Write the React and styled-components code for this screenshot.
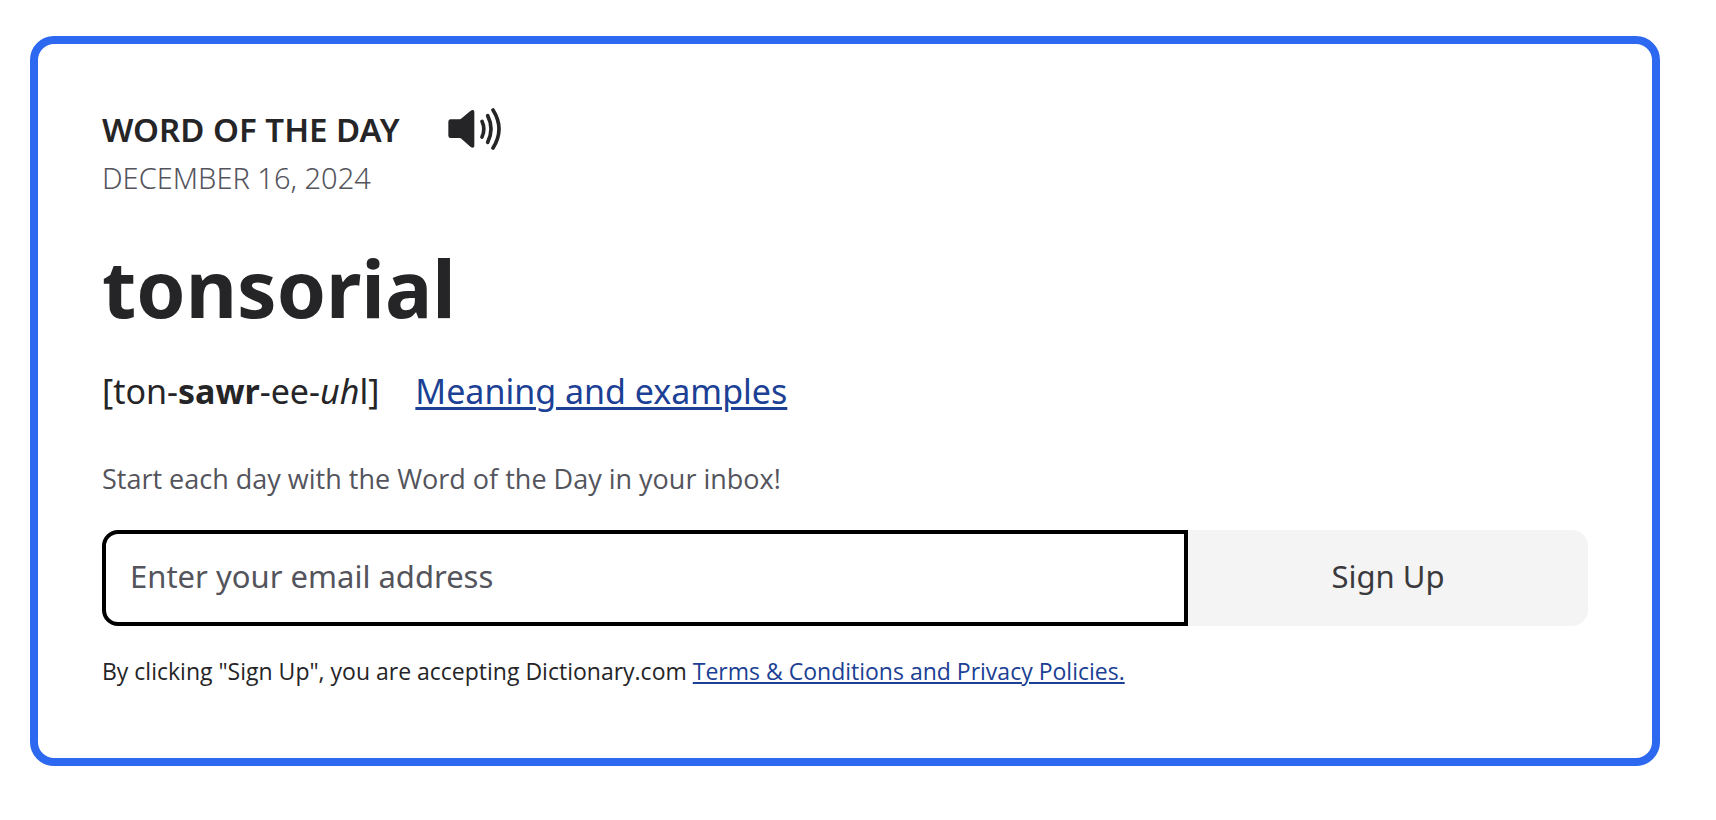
import React from "react";
import styled, { createGlobalStyle } from "styled-components";

const GlobalStyle = createGlobalStyle`
  *, *::before, *::after { box-sizing: border-box; }
  body {
    margin: 0;
    background: #fff;
    color: #252527;
    font-family: "Noto Sans", "Open Sans", sans-serif;
  }
`;

const Page = styled.main`
  padding: 36px 56px 54px 30px;
`;

const Card = styled.section`
  display: flex;
  flex-direction: column;
  padding: 64px 64px 70px;
  border: 8px solid #2d68f0;
  border-radius: 24px;
`;

const HeadingRow = styled.header`
  display: flex;
  align-items: flex-start;
  gap: 48px;
`;

const Heading = styled.h2`
  margin: 0;
  font-size: 33px;
  line-height: 44px;
  font-weight: 600;
  text-transform: uppercase;
`;

const AudioButton = styled.button`
  display: flex;
  padding: 0;
  border: 0;
  background: none;
  color: inherit;
  cursor: pointer;
`;

const DateLine = styled.time`
  margin-top: 6px;
  color: #54545c;
  font-size: 29px;
  line-height: 40px;
  font-weight: 300;
  text-transform: uppercase;
`;

const Word = styled.h1`
  margin: 46px 0 0;
  font-size: 79px;
  line-height: 88px;
  font-weight: 700;
`;

const PronunciationRow = styled.div`
  display: flex;
  flex-wrap: wrap;
  column-gap: 36px;
  margin-top: 36px;
  font-size: 34px;
  line-height: 46px;
`;

const Link = styled.a`
  color: #1b4094;
  text-decoration-line: underline;
  text-decoration-thickness: ${(p) => p.$line}px;
  text-underline-offset: ${(p) => p.$line}px;
`;

const Prompt = styled.label`
  margin-top: 46px;
  color: #54545c;
  font-family: "Open Sans", sans-serif;
  font-size: 27px;
  line-height: 38px;
`;

const Form = styled.form`
  display: grid;
  grid-template-columns: minmax(0, 1fr) minmax(160px, 400px);
  margin-top: 32px;
`;

const EmailInput = styled.input`
  min-width: 0;
  height: 96px;
  padding: 0 24px 4px;
  border: 4px solid #000;
  border-radius: 16px 0 0 16px;
  outline: 0;
  background: #fff;
  color: #252527;
  font: inherit;
  font-size: 31px;

  &::placeholder {
    color: #54545c;
    opacity: 1;
  }
`;

const SubmitButton = styled.button`
  padding: 0 24px 4px;
  border: 0;
  border-radius: 0 16px 16px 0;
  background: #f4f4f4;
  color: #3a3a3d;
  font: inherit;
  font-size: 31px;
  cursor: pointer;
`;

const Terms = styled.p`
  margin: 28px 0 0;
  font-family: "Open Sans", sans-serif;
  font-size: 23px;
  line-height: 34px;
`;

function SpeakerIcon() {
  return (
    <svg width="53" height="42" viewBox="56 39 159 126" fill="none" aria-hidden="true">
      <path
        fill="currentColor"
        d="M64 73H91Q94 73 97 70L123 48Q127 45 131 45Q135 46 135 50V153Q135 157 131 158Q127 158 123 155L97 132Q94 129 91 129H64Q57 129 57 122V80Q57 73 64 73Z"
      />
      <g stroke="currentColor" strokeWidth="11" strokeLinecap="round">
        <path d="M158 79Q169 103 158 126" />
        <path d="M175 62Q195 102 175 142" />
        <path d="M191 45Q227 102 191 159" />
      </g>
    </svg>
  );
}

export default function App() {
  return (
    <>
      <GlobalStyle />
      <Page>
        <Card>
          <HeadingRow>
            <Heading>Word of the Day</Heading>
            <AudioButton type="button" aria-label="Listen to the pronunciation">
              <SpeakerIcon />
            </AudioButton>
          </HeadingRow>
          <DateLine dateTime="2024-12-16">December 16, 2024</DateLine>
          <Word>tonsorial</Word>
          <PronunciationRow>
            <span>
              [ton-<b>sawr</b>-ee-<i>uh</i>l]
            </span>
            <Link href="#meaning" $line={3}>Meaning and examples</Link>
          </PronunciationRow>
          <Prompt htmlFor="email">Start each day with the Word of the Day in your inbox!</Prompt>
          <Form onSubmit={(event) => event.preventDefault()}>
            <EmailInput id="email" type="email" placeholder="Enter your email address" />
            <SubmitButton type="submit">Sign Up</SubmitButton>
          </Form>
          <Terms>
            By clicking "Sign Up", you are accepting Dictionary.com{" "}
            <Link href="#terms" $line={2}>Terms &amp; Conditions and Privacy Policies.</Link>
          </Terms>
        </Card>
      </Page>
    </>
  );
}
